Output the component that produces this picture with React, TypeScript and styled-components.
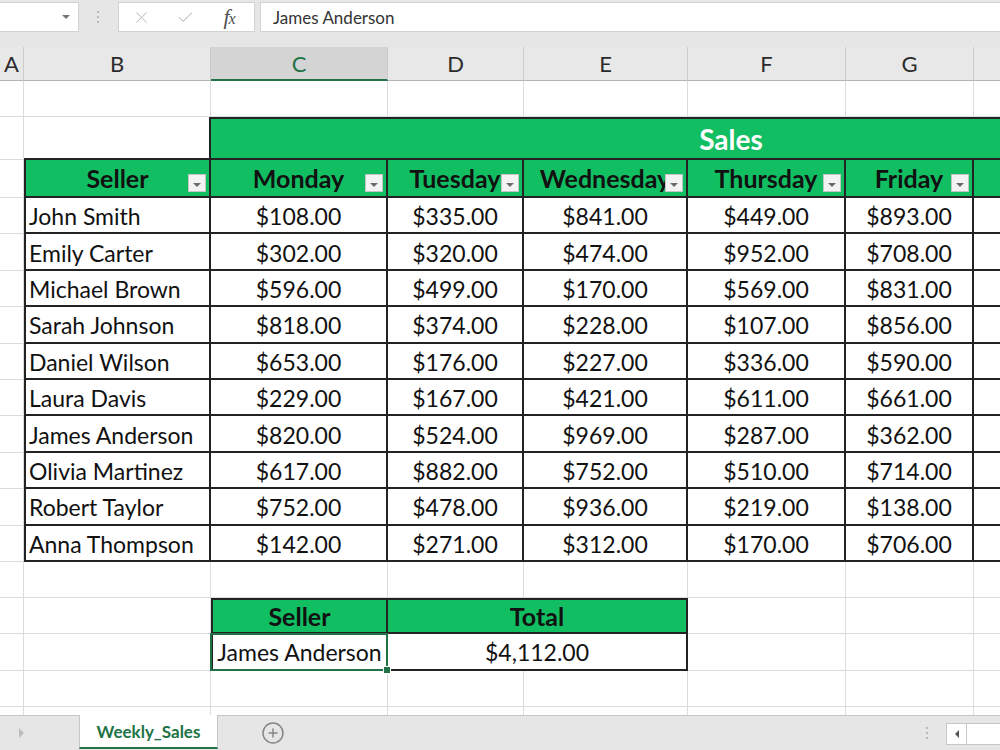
import React from "react";
import styled, { createGlobalStyle } from "styled-components";
import { X, Check, CirclePlus } from "lucide-react";

// Colours / sizes
const GREEN = "#12be62";
const DARK_GREEN = "#217346";
const LINE = "#232323";
const GRID = "#dcdcdc";

const COLS = [24, 187, 177, 136, 164, 158, 128, 279];
const colTemplate = COLS.map((c) => `${c}px`).join(" ");
const ROWS = [36, 43, 38, ...Array(10).fill(36.4), 36, 36, 37, 36, 36];
const rowTemplate = ROWS.map((r) => `${r}px`).join(" ");

const GlobalStyle = createGlobalStyle`
  html, body {
    margin: 0;
    padding: 0;
    overflow: hidden;
  }
  body {
    font-family: Lato, "Open Sans", sans-serif;
    background: #fff;
  }
`;

const Page = styled.div`
  width: 1000px;
  height: 750px;
  display: flex;
  flex-direction: column;
  overflow: hidden;
`;

// Formula bar
const Toolbar = styled.div`
  height: 47px;
  flex-shrink: 0;
  box-sizing: border-box;
  padding-top: 2px;
  background: #e6e6e6;
  display: flex;
  align-items: flex-start;
`;

const NameBox = styled.div`
  width: 79px;
  height: 30px;
  box-sizing: border-box;
  background: #fff;
  border: 1px solid #d2d2d2;
  border-left: none;
  display: flex;
  align-items: center;
  justify-content: flex-end;
  padding-right: 8px;
`;

const Caret = styled.span<{ $dir?: "down" | "right" | "left"; $color?: string }>`
  width: 0;
  height: 0;
  ${(p) =>
    p.$dir === "right"
      ? `border-top: 5px solid transparent; border-bottom: 5px solid transparent; border-left: 5px solid ${p.$color || "#777"};`
      : p.$dir === "left"
      ? `border-top: 4px solid transparent; border-bottom: 4px solid transparent; border-right: 4px solid ${p.$color || "#555"};`
      : `border-left: 4px solid transparent; border-right: 4px solid transparent; border-top: 4px solid ${p.$color || "#777"};`}
`;

const Dots = styled.div<{ $height: number }>`
  height: ${(p) => p.$height}px;
  width: 2px;
  display: flex;
  flex-direction: column;
  justify-content: center;
  gap: 3px;

  span {
    width: 2px;
    height: 2px;
    border-radius: 50%;
    background: #a8a8a8;
  }
`;

const ToolbarDots = styled(Dots)`
  margin: 0 19px 0 18px;
`;

const FxBox = styled.div`
  width: 137px;
  height: 30px;
  box-sizing: border-box;
  background: #fff;
  border: 1px solid #d2d2d2;
  display: flex;
  align-items: center;
`;

const FxSlot = styled.div`
  width: 44px;
  display: flex;
  justify-content: center;
  align-items: center;
  color: #c0c0c0;
`;

const FxText = styled.span`
  font-family: "Liberation Serif", "DejaVu Serif", serif;
  font-style: italic;
  font-size: 22px;
  color: #505050;
  letter-spacing: -1px;

  small {
    font-size: 16px;
  }
`;

const FormulaInput = styled.div`
  flex: 1;
  margin-left: 5px;
  height: 30px;
  box-sizing: border-box;
  background: #fff;
  border: 1px solid #d2d2d2;
  border-right: none;
  display: flex;
  align-items: center;
  padding-left: 12px;
  font-size: 17px;
  color: #333;
`;

// Column headers
const HeaderRow = styled.div`
  height: 34px;
  flex-shrink: 0;
  display: grid;
  grid-template-columns: ${colTemplate};
  background: #e8e8e8;
`;

const ColHead = styled.div<{ $active?: boolean }>`
  box-sizing: border-box;
  display: flex;
  align-items: center;
  justify-content: center;
  font-size: 22px;
  color: ${(p) => (p.$active ? DARK_GREEN : "#2b2b2b")};
  background: ${(p) => (p.$active ? "#d4d4d4" : "transparent")};
  border-right: 1px solid #cbcbcb;
  border-bottom: ${(p) => (p.$active ? `2px solid ${DARK_GREEN}` : "1px solid #b4b4b4")};
`;

// Sheet
const Sheet = styled.div`
  flex: 1;
  overflow: hidden;
  display: grid;
  grid-template-columns: ${colTemplate};
  grid-template-rows: ${rowTemplate};
  background: #fff;
`;

const GridCell = styled.div<{ $r: number; $c: number }>`
  grid-row: ${(p) => p.$r};
  grid-column: ${(p) => p.$c};
  border-right: 1px solid ${GRID};
  border-bottom: 1px solid ${GRID};
`;

const TableBlock = styled.div<{ $col: string; $row: string; $cols: string; $rows: string }>`
  grid-column: ${(p) => p.$col};
  grid-row: ${(p) => p.$row};
  display: grid;
  grid-template-columns: ${(p) => p.$cols};
  grid-template-rows: ${(p) => p.$rows};
`;

type Variant = "blank" | "title" | "head" | "data" | "name";

const Cell = styled.div<{ $variant: Variant; $span?: string; $left?: boolean; $top?: boolean }>`
  position: relative;
  box-sizing: border-box;
  overflow: hidden;
  white-space: nowrap;
  display: flex;
  align-items: center;
  justify-content: ${(p) => (p.$variant === "name" ? "flex-start" : "center")};
  padding-left: ${(p) => (p.$variant === "name" ? "3px" : "0")};
  padding-top: ${(p) => (p.$variant === "data" || p.$variant === "name" ? "2px" : "0")};
  grid-column: ${(p) => p.$span || "auto"};
  border-right: 2px solid ${LINE};
  border-bottom: 2px solid ${LINE};
  border-left: ${(p) => (p.$left ? `2px solid ${LINE}` : "none")};
  border-top: ${(p) => (p.$top ? `2px solid ${LINE}` : "none")};
  background: ${(p) =>
    p.$variant === "blank" ? "transparent" : p.$variant === "title" || p.$variant === "head" ? GREEN : "#fff"};
  color: ${(p) => (p.$variant === "title" ? "#fff" : "#111")};
  font-weight: ${(p) => (p.$variant === "title" || p.$variant === "head" ? 700 : 400)};
  font-size: ${(p) => (p.$variant === "title" ? "28px" : p.$variant === "head" ? "25px" : "23px")};
`;

const FilterButton = styled.span`
  position: absolute;
  right: 3px;
  bottom: 4px;
  width: 18px;
  height: 18px;
  box-sizing: border-box;
  background: #f3f3f3;
  border: 1px solid #c4c4c4;
  display: flex;
  align-items: center;
  justify-content: center;
  padding-top: 3px;
`;

const Selection = styled.div`
  grid-row: 16;
  grid-column: 3;
  position: relative;
  margin: -1px 0 0 -1px;
  border: 2px solid ${DARK_GREEN};
  pointer-events: none;
`;

const FillHandle = styled.span`
  position: absolute;
  right: -5px;
  bottom: -5px;
  width: 6px;
  height: 6px;
  background: ${DARK_GREEN};
  border: 1px solid #fff;
`;

// Sheet tabs
const TabBar = styled.div`
  height: 35px;
  flex-shrink: 0;
  box-sizing: border-box;
  background: #e6e6e6;
  border-top: 1px solid #c6c6c6;
  display: flex;
  align-items: stretch;
`;

const TabNav = styled.div`
  width: 79px;
  display: flex;
  align-items: center;
  padding-left: 19px;
  box-sizing: border-box;
`;

const SheetTab = styled.div`
  width: 139px;
  margin-top: -1px;
  margin-bottom: 1px;
  box-sizing: border-box;
  background: #fff;
  border-left: 1px solid #c6c6c6;
  border-right: 1px solid #c6c6c6;
  border-bottom: 2px solid ${DARK_GREEN};
  display: flex;
  align-items: center;
  justify-content: center;
  font-size: 17px;
  font-weight: 700;
  color: ${DARK_GREEN};
`;

const AddSheet = styled.div`
  margin-left: 43px;
  display: flex;
  align-items: center;
  color: #868686;
`;

const Filler = styled.div`
  flex: 1;
`;

const TabDots = styled(Dots)`
  margin-right: 18px;
  align-self: center;
`;

const ScrollBox = styled.div`
  width: 54px;
  margin: 7px 0 5px;
  box-sizing: border-box;
  background: #fff;
  border: 1px solid #c8c8c8;
  border-right: none;
  display: flex;
`;

const ScrollButton = styled.div`
  width: 19px;
  border-right: 1px solid #c8c8c8;
  display: flex;
  align-items: center;
  justify-content: center;
`;

// Data
const DAYS = ["Monday", "Tuesday", "Wednesday", "Thursday", "Friday"];
const SALES: [string, number[]][] = [
  ["John Smith", [108, 335, 841, 449, 893]],
  ["Emily Carter", [302, 320, 474, 952, 708]],
  ["Michael Brown", [596, 499, 170, 569, 831]],
  ["Sarah Johnson", [818, 374, 228, 107, 856]],
  ["Daniel Wilson", [653, 176, 227, 336, 590]],
  ["Laura Davis", [229, 167, 421, 611, 661]],
  ["James Anderson", [820, 524, 969, 287, 362]],
  ["Olivia Martinez", [617, 882, 752, 510, 714]],
  ["Robert Taylor", [752, 478, 936, 219, 138]],
  ["Anna Thompson", [142, 271, 312, 170, 706]],
];

const money = (n: number) => `$${n.toLocaleString("en-US", { minimumFractionDigits: 2 })}`;

const Filter = () => (
  <FilterButton>
    <Caret $color="#6b6b6b" />
  </FilterButton>
);

const App: React.FC = () => {
  return (
    <Page>
      <GlobalStyle />
      <Toolbar>
        <NameBox>
          <Caret />
        </NameBox>
        <ToolbarDots $height={30}>
          <span />
          <span />
          <span />
        </ToolbarDots>
        <FxBox>
          <FxSlot>
            <X size={19} strokeWidth={1.3} />
          </FxSlot>
          <FxSlot>
            <Check size={19} strokeWidth={1.3} />
          </FxSlot>
          <FxSlot>
            <FxText>
              f<small>x</small>
            </FxText>
          </FxSlot>
        </FxBox>
        <FormulaInput>James Anderson</FormulaInput>
      </Toolbar>

      <HeaderRow>
        {["A", "B", "C", "D", "E", "F", "G", "H"].map((l) => (
          <ColHead key={l} $active={l === "C"}>
            {l === "H" ? "" : l}
          </ColHead>
        ))}
      </HeaderRow>

      <Sheet>
        {ROWS.map((_, r) =>
          COLS.map((__, c) => <GridCell key={`${r}-${c}`} $r={r + 1} $c={c + 1} />)
        )}

        <TableBlock
          $col="2 / 9"
          $row="2 / 14"
          $cols={COLS.slice(1).map((c) => `${c}px`).join(" ")}
          $rows={ROWS.slice(1, 13).map((r) => `${r}px`).join(" ")}
        >
          <Cell $variant="blank" />
          <Cell $variant="title" $span="2 / 8" $top>
            Sales
          </Cell>

          <Cell $variant="head" $left>
            Seller
            <Filter />
          </Cell>
          {DAYS.map((d) => (
            <Cell key={d} $variant="head">
              {d}
              <Filter />
            </Cell>
          ))}
          <Cell $variant="head" />

          {SALES.map(([name, vals]) => (
            <React.Fragment key={name}>
              <Cell $variant="name" $left>
                {name}
              </Cell>
              {vals.map((v, i) => (
                <Cell key={i} $variant="data">
                  {money(v)}
                </Cell>
              ))}
              <Cell $variant="data" />
            </React.Fragment>
          ))}
        </TableBlock>

        <TableBlock $col="3 / 6" $row="15 / 17" $cols="177px 300px" $rows="36px 37px">
          <Cell $variant="head" $top $left>
            Seller
          </Cell>
          <Cell $variant="head" $top>
            Total
          </Cell>
          <Cell $variant="data" $left>
            James Anderson
          </Cell>
          <Cell $variant="data">{money(4112)}</Cell>
        </TableBlock>

        <Selection>
          <FillHandle />
        </Selection>
      </Sheet>

      <TabBar>
        <TabNav>
          <Caret $dir="right" $color="#bdbdbd" />
        </TabNav>
        <SheetTab>Weekly_Sales</SheetTab>
        <AddSheet>
          <CirclePlus size={24} strokeWidth={1.5} />
        </AddSheet>
        <Filler />
        <TabDots $height={33}>
          <span />
          <span />
          <span />
        </TabDots>
        <ScrollBox>
          <ScrollButton>
            <Caret $dir="left" />
          </ScrollButton>
        </ScrollBox>
      </TabBar>
    </Page>
  );
};

export default App;
